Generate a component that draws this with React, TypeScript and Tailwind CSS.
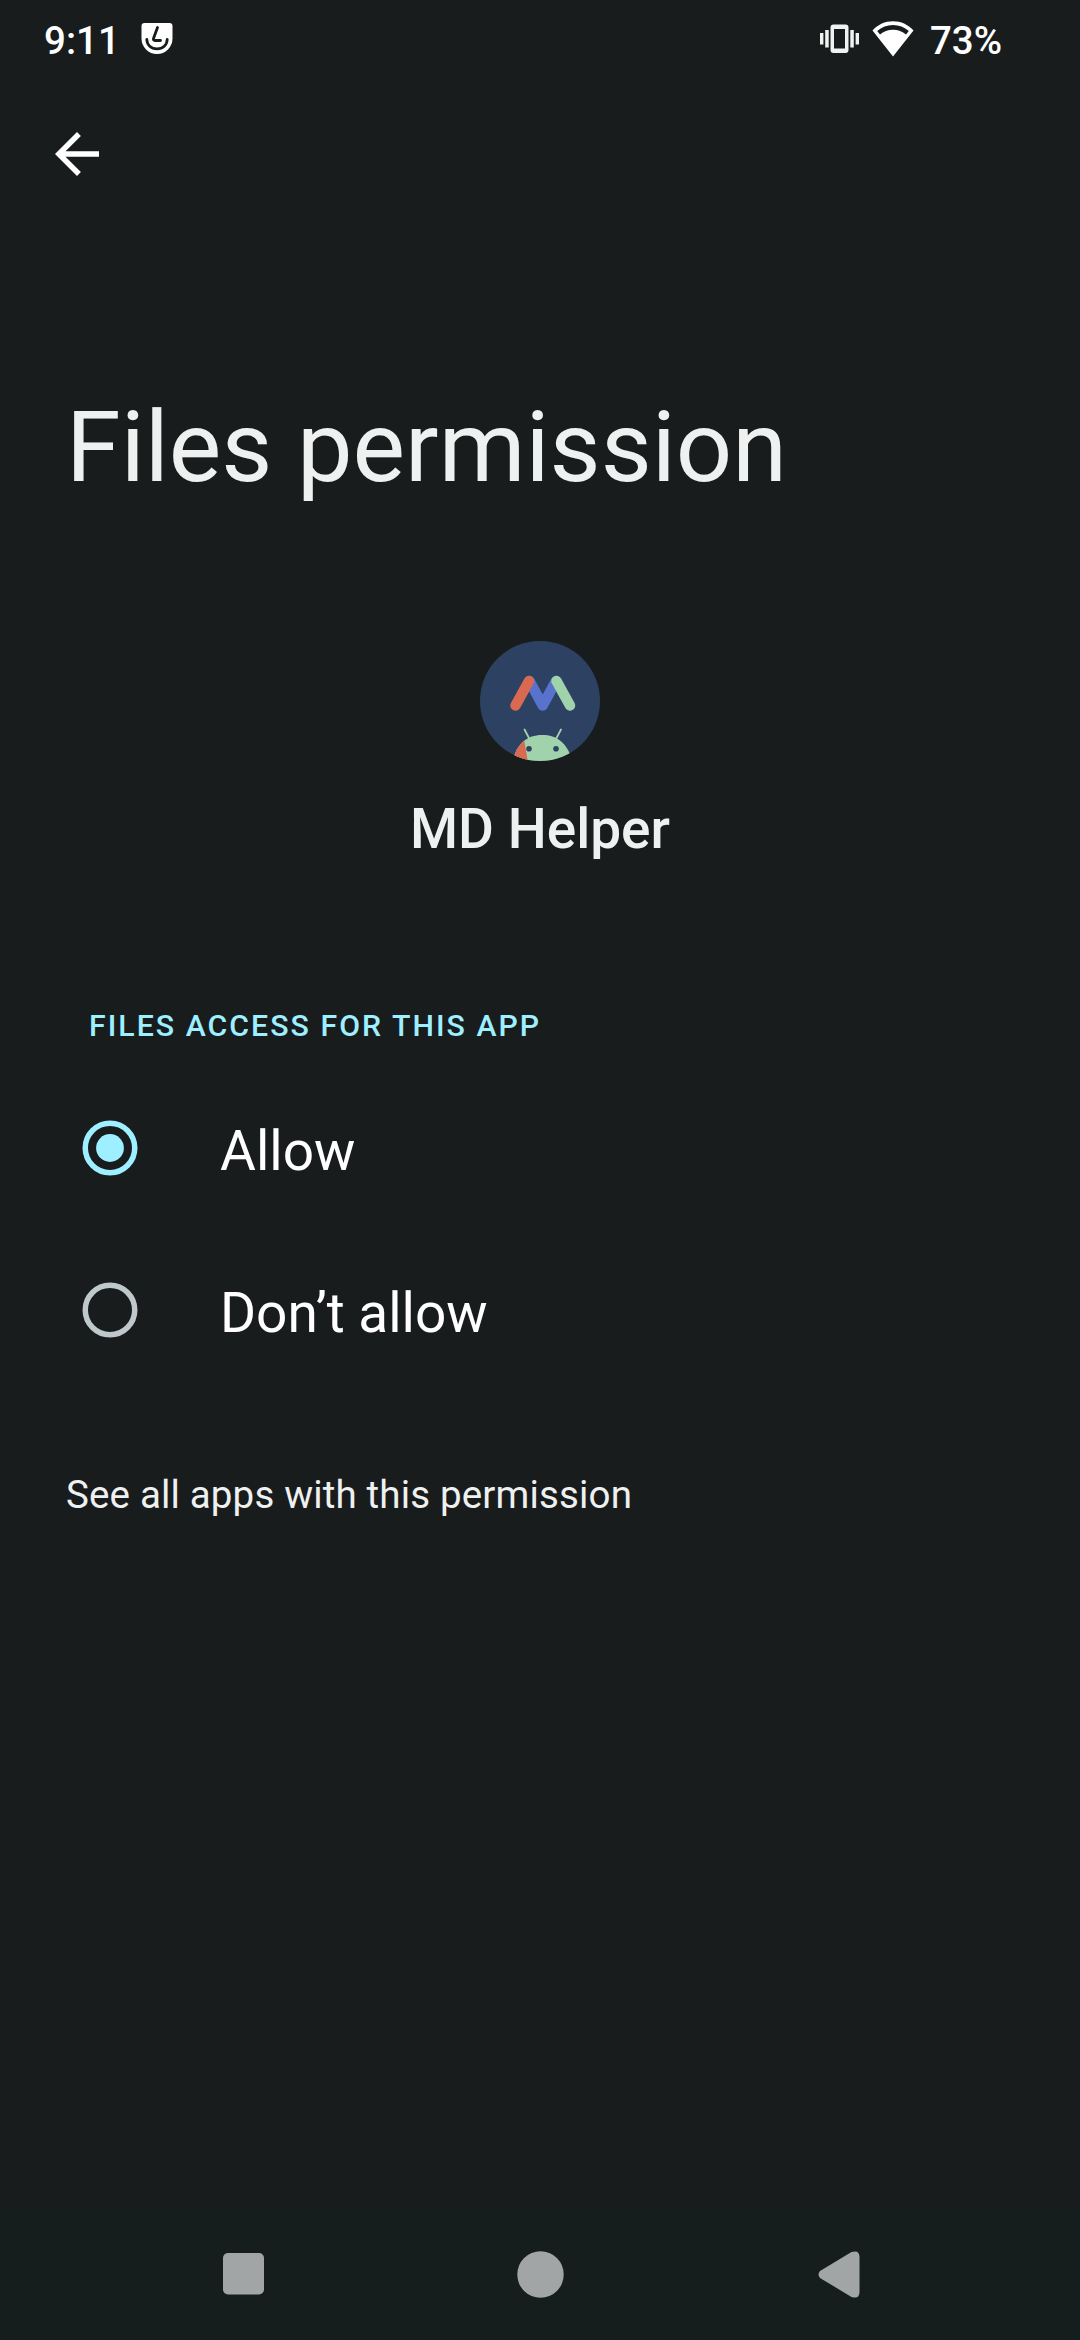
import React from "react";

function StatusBar() {
  return (
    <header className="flex h-[77px] items-start pl-[44px] pr-[78px] text-[38.5px] leading-[45px] font-medium text-white">
      <span className="mt-[18px]">9:11</span>
      <svg className="mt-[23px] ml-[21px]" width="32" height="31" viewBox="0 0 32 31" fill="none">
        <path d="M3.500 0H28.500Q31.500 0 31.500 3V15.500A15.500 15.500 0 0 1 .5 15.500V3Q.5 0 3.500 0Z" fill="#fff" />
        <path d="M16.500 4.500L12.500 15.500Q12 17.500 14 17.500H19.500" stroke="#191c1d" strokeWidth="2.800" strokeLinecap="round" />
        <path d="M5.800 16.500C6 22 10 25.800 16 25.800S26 22 26.200 16.500" stroke="#191c1d" strokeWidth="2.800" strokeLinecap="round" />
      </svg>
      <div className="ml-auto flex">
        <svg className="mt-[24px]" width="39" height="30" viewBox="0 0 39 30" fill="#f1f2f2">
          <path fillRule="evenodd" d="M13.500.500H25.500Q28.500.500 28.500 3.500V26Q28.500 29 25.500 29H13.500Q10.500 29 10.500 26V3.500Q10.500.500 13.500.500ZM14 5V24.500H25V5Z" />
          <rect x="0" y="9" width="3.400" height="11.500" />
          <rect x="5.200" y="6" width="3.500" height="17.500" />
          <rect x="30.300" y="6" width="3.500" height="17.500" />
          <rect x="35.600" y="9" width="3.400" height="11.500" />
        </svg>
        <svg className="mt-[21px] ml-[13px]" width="42" height="36" viewBox="0 0 42 36" fill="#fff">
          <path fillRule="evenodd" d="M.5 9.500C6 3.500 13 .3 21 .3S36 3.500 41.500 9.500L21 35.500ZM5.200 10L8 13.600C11.500 10.500 16 8.800 21 8.800S30.500 10.500 34 13.600L36.800 10C32.300 6 27 3.900 21 3.900S9.700 6 5.200 10Z" />
        </svg>
        <span className="mt-[18px] ml-[16px]">73%</span>
      </div>
    </header>
  );
}

function AppIcon() {
  return (
    <svg width="120" height="120" viewBox="0 0 120 120" fill="none">
      <defs>
        <clipPath id="disc"><circle cx="60" cy="60" r="60" /></clipPath>
        <clipPath id="head"><path d="M32 124C35 104 46 94 62 94S89 103 93 124Z" /></clipPath>
      </defs>
      <circle cx="60" cy="60" r="60" fill="#2d4263" />
      <path d="M49.500 40L62.700 64.500L76 40" stroke="#5872cd" strokeWidth="10.500" strokeLinecap="round" strokeLinejoin="round" />
      <path d="M49 40L35.500 64.500" stroke="#d96950" strokeWidth="10.500" strokeLinecap="round" />
      <path d="M76.500 40L90 64.500" stroke="#a0d2ac" strokeWidth="10.500" strokeLinecap="round" />
      <g clipPath="url(#disc)">
        <path d="M44.500 88.500L49.500 98M81 88.500L76 98" stroke="#a0d2ac" strokeWidth="1.800" strokeLinecap="round" />
        <g clipPath="url(#head)">
          <rect x="25" y="90" width="75" height="34" fill="#a0d2ac" />
          <path d="M25 90H42.500L48.500 124H25Z" fill="#d96950" />
        </g>
        <circle cx="49" cy="107.700" r="2.800" fill="#2d4263" />
        <circle cx="76" cy="107.700" r="2.800" fill="#2d4263" />
      </g>
    </svg>
  );
}

function RadioRow({ label, checked }: { label: string; checked: boolean }) {
  return (
    <label className="flex h-[162px] items-center pl-[82px]">
      <svg width="56" height="56" viewBox="-28 -28 56 56" fill="none">
        <circle r="24.750" stroke={checked ? "#9eefff" : "#bfc8cb"} strokeWidth="5.500" />
        {checked && <circle r="13.900" fill="#9eefff" />}
      </svg>
      <span className="mt-[5px] ml-[82px] text-[55px] leading-[64px] text-white">{label}</span>
    </label>
  );
}

function NavBar() {
  return (
    <nav className="flex h-[132px] items-center bg-[#161e1d] pl-[223px]">
      <svg width="41" height="42" viewBox="0 0 41 42" fill="#a1a5a5"><rect width="41" height="41.500" rx="5" /></svg>
      <svg className="ml-[253px]" width="47" height="47" viewBox="0 0 47 47" fill="#a1a5a5"><circle cx="23.500" cy="23.500" r="23.200" /></svg>
      <svg className="ml-[254px]" width="43" height="47" viewBox="0 0 43 47" fill="#a1a5a5">
        <path d="M2 20L33.500 1.100Q41.500 -1.500 41.500 6V41Q41.500 48.500 33.500 45.900L2 27Q-1 23.500 2 20Z" />
      </svg>
    </nav>
  );
}

export default function App() {
  return (
    <div className="flex h-[2340px] w-[1080px] flex-col overflow-hidden bg-[#191c1d] font-['Roboto',sans-serif]">
      <StatusBar />
      <button className="mt-[44px] ml-[44px] h-[66px] w-[66px]" aria-label="Back">
        <svg width="66" height="66" viewBox="0 0 24 24" fill="#fff">
          <path d="M20 11H7.830l5.590-5.590L12 4l-8 8 8 8 1.410-1.410L7.830 13H20v-2z" />
        </svg>
      </button>
      <h1 className="mt-[202px] ml-[66px] text-[99px] leading-[116px] text-[#eff1f1]">Files permission</h1>
      <section className="mt-[136px] flex flex-col items-center">
        <AppIcon />
        <h2 className="mt-[36px] text-[55px] leading-[64px] font-medium text-[#eff1f1]">MD Helper</h2>
      </section>
      <h3 className="mt-[147px] ml-[89px] text-[30.250px] leading-[36px] font-medium tracking-[2.03px] text-[#9eefff]">
        FILES ACCESS FOR THIS APP
      </h3>
      <div className="mt-[23px]">
        <RadioRow label="Allow" checked />
        <RadioRow label="Don’t allow" checked={false} />
      </div>
      <p className="mt-[81px] ml-[66px] text-[38.500px] leading-[45px] tracking-[0.16px] text-[#eff1f1]">See all apps with this permission</p>
      <div className="grow" />
      <NavBar />
    </div>
  );
}
